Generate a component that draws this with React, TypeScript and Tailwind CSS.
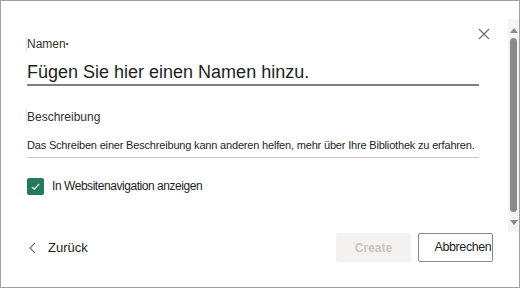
import React, { useState } from 'react';

const font = { fontFamily: '"Liberation Sans", Arial, sans-serif' };

const App: React.FC = () => {
  const [showInNav, setShowInNav] = useState(true);

  return (
    <div
      className="w-[520px] h-[288px] bg-white border border-[#a0a0a0] flex flex-col text-[#201f1e]"
      style={font}
    >
      {/* Inhalt + Scrollleiste */}
      <div className="flex h-[231px]">
        <div className="flex-1 relative pl-[26px] pr-[29px] pt-[35px]">
          <button className="absolute right-[18px] top-[27px] text-[#6b6b6b]">
            <svg width="12" height="12" viewBox="0 0 12 12" fill="none" stroke="currentColor" strokeWidth="1.1">
              <path d="M1 1 L11 11 M11 1 L1 11" />
            </svg>
          </button>

          <label className="block text-[12px] leading-4 text-[#323130] border-l border-[#e6e6e6] -ml-px">
            Namen<span className="text-[8px] align-top">•</span>
          </label>
          <input
            type="text"
            placeholder="Fügen Sie hier einen Namen hinzu."
            className="mt-[9px] w-full h-[25px] text-[18px] outline-none border-b-2 border-[#808080] placeholder:text-[#201f1e] bg-transparent"
          />

          <label className="block mt-[23px] text-[12px] leading-4 text-[#323130] border-l border-[#e6e6e6] -ml-px">
            Beschreibung
          </label>
          <input
            type="text"
            placeholder="Das Schreiben einer Beschreibung kann anderen helfen, mehr über Ihre Bibliothek zu erfahren."
            className="mt-[8px] w-full h-[25px] text-[11px] tracking-[-0.18px] outline-none border-b border-[#c8c8c8] placeholder:text-[#201f1e] bg-transparent"
          />

          <label className="mt-[19px] flex items-center gap-[8px] cursor-pointer">
            <span
              onClick={() => setShowInNav(!showInNav)}
              className={`w-[17px] h-[17px] rounded-[2px] flex items-center justify-center ${
                showInNav ? 'bg-[#237a5c]' : 'border border-[#605e5c]'
              }`}
            >
              {showInNav && (
                <svg width="11" height="11" viewBox="0 0 12 12" fill="none" stroke="white" strokeWidth="1.3">
                  <path d="M2 6.5 L4.8 9 L10 3.2" />
                </svg>
              )}
            </span>
            <span className="text-[12px] tracking-[-0.45px]">In Websitenavigation anzeigen</span>
          </label>
        </div>

        {/* Scrollleiste */}
        <div className="w-[11px] mt-[18px] bg-[#f4f4f4] flex flex-col items-center pt-[9px] pb-[7px]">
          <svg width="8" height="5" viewBox="0 0 8 5"><path d="M0 5 L4 0 L8 5 Z" fill="#8a8a8a" /></svg>
          <div className="mt-[5px] w-[7px] flex-1 rounded-full bg-[#8a8a8a]" />
          <svg className="mt-[8px]" width="8" height="5" viewBox="0 0 8 5"><path d="M0 0 L4 5 L8 0 Z" fill="#8a8a8a" /></svg>
        </div>
      </div>

      {/* Fußzeile */}
      <div className="flex items-center pl-[28px] pr-[26px] h-[31px]">
        <button className="flex items-center gap-[12px] text-[13px]">
          <svg width="7" height="12" viewBox="0 0 7 12" fill="none" stroke="#6b6b6b" strokeWidth="1.1">
            <path d="M6 1 L1 6 L6 11" />
          </svg>
          Zurück
        </button>
        <div className="ml-auto flex gap-[7px]">
          <button
            disabled
            className="w-[75px] h-[29px] rounded-[2px] bg-[#f3f2f1] text-[#c8c6c4] text-[12px] font-bold"
          >
            Create
          </button>
          <button className="w-[75px] h-[29px] rounded-[2px] border border-[#8a8886] bg-white text-[12.5px] pl-[15px] tracking-[-0.4px]">
            Abbrechen
          </button>
        </div>
      </div>
    </div>
  );
};

export default App;
